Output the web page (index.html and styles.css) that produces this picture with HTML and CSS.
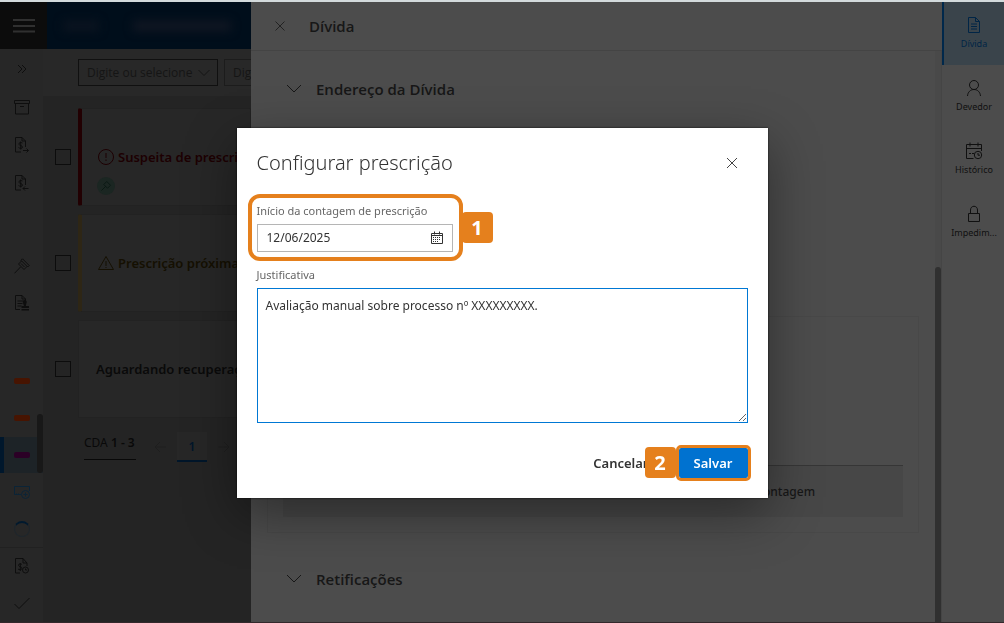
FILE: index.html
```html
<!DOCTYPE html>
<html lang="pt-BR">
<head>
    <meta charset="UTF-8">
    <meta name="viewport" content="width=device-width, initial-scale=1.0">
    <title>Dívida</title>
    <link rel="stylesheet" href="styles.css">
</head>
<body>

    <div class="app">
        <div class="page">
            <header class="topbar">
                <button class="menu-btn" aria-label="Menu">
                    <svg width="22" height="14" viewBox="0 0 22 14"><path d="M0 1h22M0 7h22M0 12.500h22"/></svg>
                </button>
                <div class="brand">
                    <span class="brand-blur"></span>
                    <span class="brand-blur wide"></span>
                </div>
            </header>

            <div class="page-body">
                <nav class="rail">
                    <div class="rail-group spaced">
                        <button aria-label="Expandir"><svg viewBox="0 0 16 16"><path d="M4 4l4 4-4 4M8 4l4 4-4 4"/></svg></button>
                        <button aria-label="Arquivo"><svg viewBox="0 0 16 16"><path d="M.5 1.500h15v3H.5zM1.500 4.500v10.500h13V4.500M6 7.500h4"/></svg></button>
                        <button aria-label="Enviar cobrança"><svg viewBox="0 0 16 16"><path d="M7 15H1.500V.5H8l3.500 3.500v6M8 .5V4h3.500M8.500 6C7 5 4.500 5.500 5 7.300s3.500 1 3.500 2.800S5.500 11.500 4.500 10.500M6.700 4.500v8M9 13.500h5.500M12.500 11.500l2 2-2 2"/></svg></button>
                        <button aria-label="Receber cobrança"><svg viewBox="0 0 16 16"><path d="M7 15H1.500V.5H8l3.500 3.500v6M8 .5V4h3.500M8.500 6C7 5 4.500 5.500 5 7.300s3.500 1 3.500 2.800S5.500 11.500 4.500 10.500M6.700 4.500v8M9 13.500h5.500M11 11.500l-2 2 2 2"/></svg></button>
                    </div>
                    <div class="rail-group second">
                        <button aria-label="Julgamento"><svg viewBox="0 0 16 16"><path d="M8.500.8l6.700 6.700-1.500 1.500L7 2.300zM7.500 3L4.500 6l5.500 5.500 3-3M7 5.500L10.500 9M6.500 9L.5 15.300"/></svg></button>
                        <button aria-label="Documento"><svg viewBox="0 0 16 16"><path d="M6 14.500H1.500V.5H8l3.500 3.500v3M8 .5V4h3.500M3.500 6h6M3.500 8.500h5M3.500 11h4"/><path class="solid" d="M9 8a2 2 0 1 1 3.500 0l-.7 3h3.200v2H7.500v-2H10zM7.500 14H15v1.500H7.500z"/></svg></button>
                    </div>
                    <div class="rail-group third">
                        <button aria-label="Etiqueta laranja"><span class="tag"></span></button>
                        <button aria-label="Etiqueta laranja 2"><span class="tag"></span></button>
                        <button class="active" aria-label="Etiqueta roxa"><span class="tag purple"></span></button>
                        <button class="blue" aria-label="Adicionar"><svg viewBox="0 0 16 16"><path d="M7 10.500H.5v-8h15V7M2.500 10.500v-1M4.500 10.500v-1"/><circle cx="11.500" cy="10.500" r="4"/><path d="M11.500 8.500v4M9.500 10.500h4"/></svg></button>
                        <button class="blue" aria-label="Carregando"><span class="spinner"></span></button>
                    </div>
                    <div class="rail-group last">
                        <button aria-label="Histórico de valores"><svg viewBox="0 0 16 16"><path d="M6 15H1.500V.5H9L13 5v3M9 .5V5h4M8 6.500C6.500 5.500 4 6 4.500 7.500S8 8.500 8 10.300 5 12 4 11M6.300 5v8"/><circle cx="11.500" cy="12" r="3"/><path d="M11.500 10.500V12H13"/></svg></button>
                        <button aria-label="Concluir"><svg viewBox="0 0 16 16"><path d="M.5 9l4.500 4.500L15.500 3"/></svg></button>
                    </div>
                    <span class="rail-scroll"></span>
                </nav>

                <main class="list">
                    <div class="filters">
                        <div class="select">
                            <select aria-label="Filtro 1"><option>Digite ou selecione</option></select>
                            <svg width="12" height="8" viewBox="0 0 12 8"><path d="M.5 1L6 6.500 11.500 1"/></svg>
                        </div>
                        <div class="select light">
                            <select aria-label="Filtro 2"><option>Digite ou selecione</option></select>
                            <svg width="12" height="8" viewBox="0 0 12 8"><path d="M.5 1L6 6.500 11.500 1"/></svg>
                        </div>
                    </div>

                    <div class="row">
                        <input type="checkbox" aria-label="Suspeita de prescrição">
                        <div class="card danger">
                            <div class="card-title">
                                <svg width="18" height="18" viewBox="0 0 18 18"><circle cx="9" cy="9" r="7.500"/><path d="M9 5v5M9 11.500v1.500"/></svg>
                                Suspeita de prescrição
                            </div>
                            <span class="bubble"><svg width="12" height="12" viewBox="0 0 16 16"><path d="M9 2l5 5-4 4-5-5zM7.500 8.500L2 14"/></svg></span>
                        </div>
                    </div>
                    <div class="row">
                        <input type="checkbox" aria-label="Prescrição próxima">
                        <div class="card warning">
                            <div class="card-title">
                                <svg width="18" height="18" viewBox="0 0 18 18"><path d="M9 2.500l7.500 13h-15zM9 7v5M9 13v1"/></svg>
                                Prescrição próxima
                            </div>
                        </div>
                    </div>
                    <div class="row">
                        <input type="checkbox" aria-label="Aguardando recuperação">
                        <div class="card">
                            <div class="card-title">Aguardando recuperação</div>
                        </div>
                    </div>

                    <div class="pager">
                        <span class="count">CDA <b>1 - 3</b></span>
                        <button aria-label="Anterior"><svg width="14" height="14" viewBox="0 0 14 14"><path d="M13 7H2M7 2L2 7l5 5"/></svg></button>
                        <button class="current">1</button>
                        <button aria-label="Próxima"><svg width="14" height="14" viewBox="0 0 14 14"><path d="M1 7h11M7 2l5 5-5 5"/></svg></button>
                    </div>
                </main>
            </div>
        </div>

        <section class="drawer">
            <header class="drawer-header">
                <button aria-label="Fechar painel"><svg width="10" height="10" viewBox="0 0 10 10"><path d="M.5.5l9 9M9.500.5l-9 9"/></svg></button>
                <h2>Dívida</h2>
            </header>
            <div class="drawer-body">
                <div class="drawer-content">
                    <button class="accordion"><svg width="16" height="10" viewBox="0 0 16 10"><path d="M1 1l7 7 7-7"/></svg>Endereço da Dívida</button>
                    <div class="box">
                        <table>
                            <thead><tr><th>contagem</th></tr></thead>
                        </table>
                    </div>
                    <button class="accordion"><svg width="16" height="10" viewBox="0 0 16 10"><path d="M1 1l7 7 7-7"/></svg>Retificações</button>
                </div>
                <div class="scrollbar"><span></span></div>
            </div>
        </section>

        <nav class="tabs">
            <a href="#divida" class="active">
                <svg viewBox="0 0 18 18"><path d="M3.500 1.500h7l4 4v11h-11zM10.500 1.500v4h4M6 8h6M6 10.500h6M6 13h6"/></svg>
                Dívida
            </a>
            <a href="#devedor">
                <svg viewBox="0 0 18 18"><circle cx="9" cy="6" r="4.500"/><path d="M2.500 17c.3-4 3-6.500 6.500-6.500s6.200 2.500 6.500 6.500"/></svg>
                Devedor
            </a>
            <a href="#historico">
                <svg viewBox="0 0 18 18"><path d="M8.500 16.500h-7v-14h15V9M1.500 6.500h15M5 .5v4M13 .5v4M4 11.500h2M7 11.500h2"/><circle cx="13" cy="13" r="3.700"/><path d="M13 11v2.200h2"/></svg>
                Histórico
            </a>
            <a href="#impedimentos">
                <svg viewBox="0 0 18 18"><path d="M3.500 8.500h11v8h-11zM5.500 8.500V5c0-5 7-5 7 0v3.500"/></svg>
                Impedim...
            </a>
        </nav>
    </div>

    <div class="overlay">
        <form class="dialog" role="dialog" aria-labelledby="dialog-title">
            <div class="dialog-header">
                <h1 id="dialog-title">Configurar prescrição</h1>
                <button type="button" class="close-btn" aria-label="Fechar"><svg width="12" height="12" viewBox="0 0 12 12"><path d="M1 1l10 10M11 1L1 11"/></svg></button>
            </div>

            <div class="field date-field">
                <label for="start-date">Início da contagem de prescrição</label>
                <div class="date-input">
                    <input type="text" id="start-date" value="12/06/2025">
                    <svg width="14" height="14" viewBox="0 0 14 14"><path d="M1.500 2.500h11v10h-11zM1.500 4.500h11M4.500.5v3M9.500.5v3"/><path class="dots" d="M3 6.500h8M3 8.500h8M3 10.500h5"/></svg>
                </div>
                <span class="step step-one">1</span>
            </div>

            <div class="field">
                <label for="reason">Justificativa</label>
                <textarea id="reason">Avaliação manual sobre processo nº XXXXXXXXX.</textarea>
            </div>

            <div class="actions">
                <button type="button" class="cancel-btn">Cancelar</button>
                <div class="save">
                    <button type="submit" class="save-btn">Salvar</button>
                    <span class="step step-two">2</span>
                </div>
            </div>
        </form>
    </div>

</body>
</html>
```

FILE: styles.css
```css
* {
    box-sizing: border-box;
}

body {
    font-family: "Noto Sans", "Open Sans", sans-serif;
    font-size: 12px;
    margin: 0;
    background-color: #242424;
    color: #171717;
}

button, input, select, textarea {
    font-family: inherit;
    font-size: 12px;
}

button {
    background: none;
    border: none;
    padding: 0;
    color: inherit;
    cursor: pointer;
}

svg {
    display: block;
    flex: none;
    fill: none;
    stroke: currentColor;
}

h1, h2 {
    margin: 0;
}

.app {
    display: flex;
    height: 100vh;
    overflow: hidden;
    border-top: 2px solid #d3dadc;
    border-bottom: 1px solid #33282b;
}

/* Left page */
.page {
    width: 25%;
    display: flex;
    flex-direction: column;
    overflow: hidden;
}

.topbar {
    display: flex;
    height: 47px;
    flex: none;
    background-color: #000e1b;
}

.menu-btn {
    width: 47px;
    display: flex;
    justify-content: center;
    align-items: center;
    background-color: #0c0c0c;
    color: #303030;
}

.menu-btn svg {
    stroke-width: 2;
}

.brand {
    display: flex;
    align-items: center;
    gap: 34px;
    padding-left: 16px;
}

.brand-blur {
    width: 36px;
    height: 10px;
    background-color: #0b1420;
    filter: blur(5px);
}

.brand-blur.wide {
    width: 98px;
    background-color: #111723;
}

.page-body {
    display: flex;
    flex: 1;
    min-height: 0;
}

.rail {
    position: relative;
    width: 43px;
    flex: none;
    background-color: #272727;
    color: #0e0e0e;
}

.rail-group {
    display: flex;
    flex-direction: column;
    gap: 1px;
}

.rail-group.spaced {
    gap: 2px;
    padding-top: 2px;
}

.rail-group.second {
    margin-top: 47px;
}

.rail-group.third {
    margin-top: 42px;
}

.rail-group.last {
    border-top: 1px solid #212121;
}

.rail button {
    display: flex;
    justify-content: center;
    align-items: center;
    height: 36px;
    width: 100%;
}

.rail svg {
    width: 16px;
    height: 16px;
}

.rail .solid {
    fill: currentColor;
    stroke: none;
}

.rail button.active {
    background-color: #1d2327;
    border-left: 4px solid #00172c;
    padding-right: 4px;
}

.rail button.blue {
    color: #0b2437;
}

.tag {
    width: 16px;
    height: 6px;
    border-radius: 2px;
    background-color: #471401;
}

.tag.purple {
    background-color: #2b0026;
}

.spinner {
    width: 16px;
    height: 16px;
    border: 1px solid #1e262c;
    border-top: 2px solid #00192e;
    border-radius: 50%;
}

.rail-scroll {
    position: absolute;
    right: 0;
    top: 365px;
    width: 6px;
    height: 59px;
    border-radius: 3px;
    background-color: #181818;
}

.list {
    flex: 1;
    min-width: 0;
}

.filters {
    display: flex;
    gap: 6px;
    padding: 10px 0 10px 35px;
    margin-bottom: 12px;
    background-color: #282828;
}

.select {
    position: relative;
    flex: none;
    color: #151515;
}

.select select {
    appearance: none;
    display: block;
    width: 140px;
    height: 27px;
    padding: 0 8px;
    border: 1px solid #101010;
    border-radius: 0;
    background: none;
    color: #151515;
    font-family: "Open Sans", sans-serif;
}

.select.light select {
    border-color: #1c1c1c;
}

.select svg {
    position: absolute;
    top: 10px;
    right: 8px;
    pointer-events: none;
}

.row {
    display: flex;
    align-items: center;
    gap: 7px;
    margin-bottom: 8px;
    padding-left: 12px;
}

.row input {
    appearance: none;
    width: 16px;
    height: 16px;
    margin: 0;
    flex: none;
    border: 1px solid #0c0c0c;
}

.card {
    display: flex;
    flex-direction: column;
    justify-content: center;
    flex: 1;
    min-width: 0;
    height: 98px;
    padding-left: 17px;
    background-color: #272727;
    border: 1px solid #222222;
    color: #0a0a0a;
}

.card.danger {
    justify-content: flex-start;
    padding: 37px 0 0 15px;
    border-left: 4px solid #220002;
    border-radius: 2px;
    color: #1d0002;
}

.card.warning {
    padding-left: 15px;
    border-left: 4px solid #2e2615;
    border-radius: 2px;
    color: #151002;
}

.card-title {
    display: flex;
    align-items: center;
    gap: 3px;
    height: 22px;
    font-size: 13px;
    font-weight: 600;
    white-space: nowrap;
}

.bubble {
    display: flex;
    justify-content: center;
    align-items: center;
    width: 18px;
    height: 18px;
    margin-top: 9px;
    border-radius: 50%;
    background-color: #1b2622;
    color: #06150f;
}

.pager {
    display: flex;
    align-items: center;
    gap: 2px;
    padding: 6px 0 0 41px;
    color: #1e1e1e;
}

.pager button {
    display: flex;
    justify-content: center;
    align-items: center;
    width: 30px;
    height: 30px;
    flex: none;
}

.pager .current {
    background-color: #272727;
    border-bottom: 2px solid #00162a;
    color: #00162a;
    font-weight: 600;
}

.count {
    width: 52px;
    height: 26px;
    flex: none;
    margin-right: 7px;
    border-bottom: 1px solid #080808;
    color: #090909;
    white-space: nowrap;
}

.count b {
    font-weight: 600;
}

/* Drawer */
.drawer {
    flex: 1;
    min-width: 0;
    display: flex;
    flex-direction: column;
    background-color: #4c4c4c;
}

.drawer-header {
    display: flex;
    align-items: center;
    gap: 24px;
    height: 49px;
    flex: none;
    padding-left: 24px;
    border-bottom: 1px solid #444444;
}

.drawer-header button {
    color: #222222;
}

.drawer-header h2, .accordion {
    font-family: "Open Sans", sans-serif;
    font-size: 15px;
    font-weight: 600;
}

.drawer-body {
    display: flex;
    flex: 1;
    min-height: 0;
}

.drawer-content {
    flex: 1;
    padding: 23px 16px 0;
}

.accordion {
    display: flex;
    align-items: center;
    gap: 14px;
    height: 30px;
    padding-left: 19px;
}

.box {
    margin: 212px 0 31px;
    padding: 148px 15px 15px;
    border: 1px solid #484848;
}

table {
    width: 100%;
    border-collapse: collapse;
}

th {
    height: 51px;
    padding: 0 88px 0 0;
    background-color: #474747;
    border-top: 1px solid #363636;
    font-weight: 500;
    text-align: right;
}

.scrollbar {
    width: 7px;
    padding-top: 216px;
    border-right: 1px solid #454545;
    background-color: #494949;
}

.scrollbar span {
    display: block;
    height: 100%;
    border-radius: 3px 3px 0 0;
    background-color: #303030;
}

.tabs {
    width: 62px;
    flex: none;
    background-color: #4c4c4c;
}

.tabs a {
    display: flex;
    flex-direction: column;
    align-items: center;
    gap: 3px;
    height: 63px;
    padding: 14px 0 0 2px;
    color: #101010;
    font-size: 9px;
    line-height: 14px;
    text-decoration: none;
    white-space: nowrap;
}

.tabs a.active {
    background-color: #3a444b;
    border-left: 2px solid #00284b;
    padding-left: 0;
    color: #002546;
}

.tabs svg {
    width: 18px;
    height: 18px;
}

/* Dialog */
.overlay {
    position: fixed;
    inset: 0;
    display: flex;
    justify-content: center;
    align-items: center;
    padding-top: 2px;
}

.dialog {
    width: 531px;
    max-width: 100%;
    padding: 20px;
    background-color: white;
    box-shadow: 0 0 2px rgba(0, 0, 0, 0.8), 0 16px 48px rgba(0, 0, 0, 0.4);
    color: #333333;
}

.dialog-header {
    display: flex;
    justify-content: space-between;
    align-items: center;
    height: 30px;
    margin-bottom: 24px;
}

.dialog-header h1 {
    font-size: 20px;
    font-weight: 300;
}

.close-btn {
    padding: 10px;
    color: #444444;
}

.field {
    position: relative;
}

.field label {
    display: block;
    height: 22px;
    line-height: 18px;
    font-size: 11px;
    color: #666666;
}

.date-field {
    width: 196px;
    margin-bottom: 14px;
}

/* marcação em volta do campo */
.date-field::after {
    content: "";
    position: absolute;
    inset: -8px -10px -9px -9px;
    border: 4px solid #e5801d;
    border-radius: 12px;
    pointer-events: none;
}

.date-input {
    display: flex;
    align-items: center;
    height: 28px;
    padding: 0 8px;
    border: 1px solid #b5b5b5;
}

.date-input input {
    flex: 1;
    min-width: 0;
    border: none;
    outline: none;
    padding: 0 1px;
    color: #333333;
}

.date-input .dots {
    stroke-dasharray: 1 1;
}

.field textarea {
    display: block;
    width: 100%;
    height: 135px;
    padding: 8px;
    border: 1px solid #0078d4;
    border-radius: 0;
    outline: none;
    color: #333333;
    font-size: 12px;
    line-height: 18px;
}

.step {
    position: absolute;
    display: flex;
    justify-content: center;
    align-items: center;
    width: 31px;
    height: 31px;
    border-radius: 4px;
    background-color: #e5801d;
    color: white;
    font-family: "Open Sans", sans-serif;
    font-size: 20px;
    font-weight: 700;
}

.step-one {
    top: 10px;
    left: 205px;
}

.step-two {
    top: -1px;
    right: 72px;
}

.actions {
    display: flex;
    justify-content: flex-end;
    align-items: center;
    gap: 30px;
    margin-top: 25px;
}

.cancel-btn {
    font-size: 13px;
    font-weight: 600;
}

.save {
    position: relative;
}

.save-btn {
    display: block;
    width: 69px;
    height: 30px;
    border-radius: 2px;
    outline: 3px solid #e5801d;
    background-color: #0072d0;
    color: white;
    font-size: 13px;
    font-weight: 600;
}
```
